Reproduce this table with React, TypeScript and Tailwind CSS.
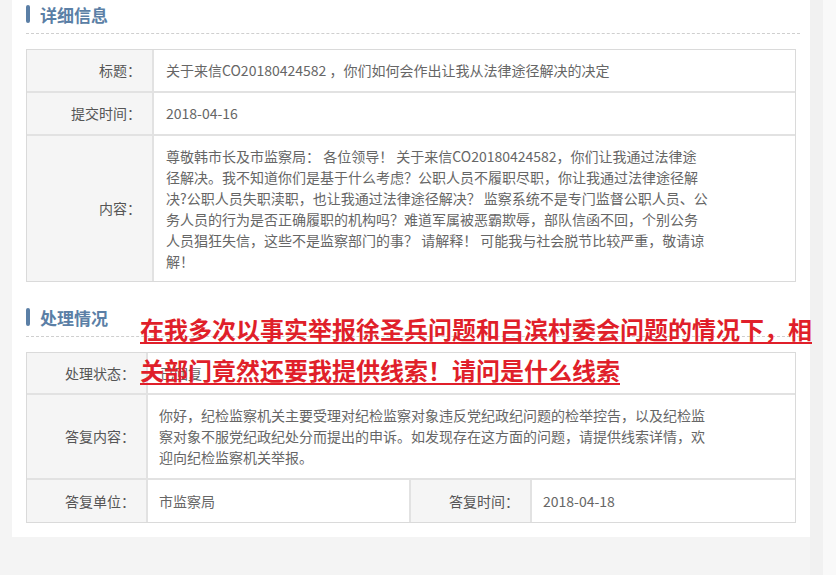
import React from "react";

const font = { fontFamily: '"Microsoft YaHei", "Noto Sans CJK SC", "Noto Sans", sans-serif' };

const contentLines = [
  "尊敬韩市长及市监察局： 各位领导！ 关于来信CO20180424582，你们让我通过法律途",
  "径解决。我不知道你们是基于什么考虑？公职人员不履职尽职，你让我通过法律途径解",
  "决?公职人员失职渎职，也让我通过法律途径解决？ 监察系统不是专门监督公职人员、公",
  "务人员的行为是否正确履职的机构吗？难道军属被恶霸欺辱，部队信函不回，个别公务",
  "人员猖狂失信，这些不是监察部门的事？ 请解释！ 可能我与社会脱节比较严重，敬请谅",
  "解！",
];

const replyLines = [
  "你好，纪检监察机关主要受理对纪检监察对象违反党纪政纪问题的检举控告，以及纪检监",
  "察对象不服党纪政纪处分而提出的申诉。如发现存在这方面的问题，请提供线索详情，欢",
  "迎向纪检监察机关举报。",
];

const SectionTitle = ({ title, className = "" }: { title: string; className?: string }) => (
  <div className={className}>
    <div className="flex items-center h-[28px]">
      <span className="w-[4px] h-[18px] rounded-[2px] bg-[#5b7fa6]" />
      <span className="ml-[10px] text-[17px] font-bold text-[#5b7fa6] leading-none">{title}</span>
    </div>
    <div className="mt-[5px] w-[774px] border-t border-dashed border-[#cfcfcf]" />
  </div>
);

const Label = ({ children, w }: { children: React.ReactNode; w: string }) => (
  <div className={`${w} shrink-0 bg-[#f5f5f5] flex items-center justify-end pr-[11px] text-[#555] border-r-2 border-[#e2e2e2]`}>
    {children}
  </div>
);

const App = () => {
  return (
    <div className="flex w-[836px] h-[575px] bg-[#f9f9f9] text-[14px]" style={font}>
      <div className="w-[12px] bg-[#f4f4f4]" />
      <div className="w-[798px] flex flex-col bg-[#f4f4f4]">
        <div className="relative bg-white pl-[14px] pb-[14px]">
          <SectionTitle title="详细信息" />

          <div className="mt-[15px] w-[770px] border border-[#dadada] text-[#666]">
            <div className="flex h-[43px] border-b-2 border-[#e2e2e2]">
              <Label w="w-[127px]">标题：</Label>
              <div className="flex items-center pl-[12px] whitespace-nowrap">关于来信CO20180424582 ，你们如何会作出让我从法律途径解决的决定</div>
            </div>
            <div className="flex h-[43px] border-b-2 border-[#e2e2e2]">
              <Label w="w-[127px]">提交时间：</Label>
              <div className="flex items-center pl-[12px]">2018-04-16</div>
            </div>
            <div className="flex h-[145px]">
              <Label w="w-[127px]">内容：</Label>
              <div className="flex flex-col justify-center pl-[12px] leading-[21px]">
                {contentLines.map((l, i) => (
                  <span key={i} className="whitespace-nowrap">{l}</span>
                ))}
              </div>
            </div>
          </div>

          <SectionTitle title="处理情况" className="mt-[21px]" />

          <div className="mt-[15px] w-[770px] border border-[#dadada] text-[#666]">
            <div className="flex h-[42px] border-b-2 border-[#e2e2e2]">
              <Label w="w-[121px]">处理状态：</Label>
              <div className="flex items-center pl-[12px]">已回复</div>
            </div>
            <div className="flex h-[85px] border-b-2 border-[#e2e2e2]">
              <Label w="w-[121px]">答复内容：</Label>
              <div className="flex flex-col justify-center pl-[11px] leading-[21px]">
                {replyLines.map((l, i) => (
                  <span key={i} className="whitespace-nowrap">{l}</span>
                ))}
              </div>
            </div>
            <div className="flex h-[42px]">
              <Label w="w-[121px]">答复单位：</Label>
              <div className="w-[263px] flex items-center pl-[11px] border-r-2 border-[#e2e2e2]">市监察局</div>
              <Label w="w-[121px]">答复时间：</Label>
              <div className="flex items-center pl-[11px]">2018-04-18</div>
            </div>
          </div>

          {/* red annotation laid over the page */}
          <div className="absolute left-[128px] top-[308px] text-[24px] font-bold leading-[41px] text-[#e01f2a] whitespace-nowrap">
            <div className="underline decoration-2 underline-offset-[3px]">在我多次以事实举报徐圣兵问题和吕滨村委会问题的情况下，相</div>
            <div className="underline decoration-2 underline-offset-[3px]">关部门竟然还要我提供线索！请问是什么线索</div>
          </div>
        </div>
      </div>
      <div className="w-[13px] bg-[#f1f1f1]" />
    </div>
  );
};

export default App;
